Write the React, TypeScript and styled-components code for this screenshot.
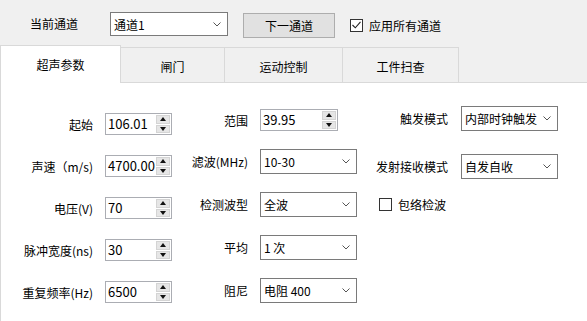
import React, { FC } from 'react';
import styled, { createGlobalStyle } from 'styled-components';

const GlobalStyle = createGlobalStyle`
  html, body {
    margin: 0;
    padding: 0;
    background: #f0f0f0;
  }

  body {
    font-family: "Noto Sans CJK SC", "Noto Sans", sans-serif;
    font-size: 12px;
    color: #000;
  }
`;

const Window = styled.div`
  width: 587px;
  height: 321px;
  background: #f0f0f0;
  display: flex;
  flex-direction: column;
  overflow: hidden;
`;

const TopBar = styled.div`
  height: 45px;
  padding: 12px 0 0 30px;
  box-sizing: border-box;
  display: flex;
  align-items: flex-start;
`;

const TopLabel = styled.span`
  width: 80px;
  height: 24px;
  line-height: 24px;
`;

const Button = styled.button`
  margin: 1px 0 0 15px;
  width: 92px;
  height: 25px;
  padding: 0;

  font: inherit;
  color: #000;
  background: #e1e1e1;
  border: 1px solid #adadad;
`;

const CheckRow = styled.label<{ $ml?: number; $h: number }>`
  margin-left: ${ p => p.$ml ?? 0 }px;
  height: ${ p => p.$h }px;

  display: flex;
  align-items: center;
  gap: 6px;
`;

const CheckBox = styled.span`
  width: 13px;
  height: 13px;
  box-sizing: border-box;

  display: flex;
  align-items: center;
  justify-content: center;

  background: #fff;
  border: 1px solid #333;
`;

const TabBar = styled.div`
  height: 37px;
  display: flex;
  align-items: flex-end;
  position: relative;
  z-index: 1;
`;

const Tab = styled.div<{ $w: number; $active?: boolean }>`
  width: ${ p => p.$w }px;
  height: ${ p => p.$active ? 38 : 35 }px;
  margin-bottom: ${ p => p.$active ? -1 : 0 }px;
  box-sizing: border-box;

  display: flex;
  align-items: center;
  justify-content: center;
  padding-top: ${ p => p.$active ? 0 : 2 }px;

  background: ${ p => p.$active ? '#fff' : '#f0f0f0' };
  border: 1px solid #d9d9d9;
  border-bottom: none;

  & + & {
    border-left: none;
  }
`;

const Panel = styled.div`
  flex: 1;
  background: #fff;
  border-top: 1px solid #d9d9d9;
  border-left: 1px solid #d9d9d9;

  display: flex;
  align-items: flex-start;
`;

const Column = styled.div<{ $top: number; $gap: number; $labelW: number; $boxGap?: number }>`
  --label-w: ${ p => p.$labelW }px;
  --box-gap: ${ p => p.$boxGap ?? 12 }px;

  padding-top: ${ p => p.$top }px;
  display: flex;
  flex-direction: column;
  gap: ${ p => p.$gap }px;
`;

const Field = styled.div`
  display: flex;
  align-items: center;
  gap: var(--box-gap);
`;

const Label = styled.span`
  width: var(--label-w);
  text-align: right;
  white-space: nowrap;
`;

const SpinFrame = styled.div<{ $w: number }>`
  width: ${ p => p.$w }px;
  height: 22px;
  box-sizing: border-box;

  display: flex;
  align-items: stretch;

  background: #fff;
  border: 1px solid #abadb3;
`;

const SpinValue = styled.span`
  flex: 1;
  padding-left: 2px;
  line-height: 20px;
  font-size: 13px;
`;

const SpinButtons = styled.div`
  width: 14px;
  margin: 1px 1px 1px 0;
  display: flex;
  flex-direction: column;
  gap: 1px;
`;

const SpinButton = styled.div`
  flex: 1;
  display: flex;
  align-items: center;
  justify-content: center;
  background: #e6e6e6;
  border: 1px solid #d4d4d4;
`;

const ComboFrame = styled.div<{ $w: number; $h?: number }>`
  width: ${ p => p.$w }px;
  height: ${ p => p.$h ?? 25 }px;
  box-sizing: border-box;
  padding: 0 6px 0 3px;

  display: flex;
  align-items: center;
  justify-content: space-between;

  background: #fff;
  border: 1px solid #7a7a7a;
  font-size: 12px;
  white-space: nowrap;
`;

const Wide = styled.div<{ $pl: number; $mt: number }>`
  padding-left: ${ p => p.$pl }px;
  margin-top: ${ p => p.$mt }px;
`;

const Chevron: FC = () => (
	<svg width="8" height="5" viewBox="0 0 8 5">
		<polyline points="0.5,0.5 4,4 7.5,0.5" fill="none" stroke="#555" strokeWidth="1" />
	</svg>
);

const Arrow: FC<{ up?: boolean }> = ({ up }) => (
	<svg width="6" height="4" viewBox="0 0 6 4">
		<polygon points={ up ? '3,0 6,4 0,4' : '0,0 6,0 3,4' } fill="#111" />
	</svg>
);

const Tick: FC = () => (
	<svg width="9" height="8" viewBox="0 0 9 8">
		<polyline points="0.5,4 3.3,6.8 8.5,0.8" fill="none" stroke="#222" strokeWidth="1.1" />
	</svg>
);

const Spin: FC<{ value: string; w: number }> = ({ value, w }) => (
	<SpinFrame $w={ w }>
		<SpinValue>{ value }</SpinValue>
		<SpinButtons>
			<SpinButton><Arrow up /></SpinButton>
			<SpinButton><Arrow /></SpinButton>
		</SpinButtons>
	</SpinFrame>
);

const Combo: FC<{ value: string; w: number; h?: number }> = ({ value, w, h }) => (
	<ComboFrame $w={ w } $h={ h }>
		<span>{ value }</span>
		<Chevron />
	</ComboFrame>
);

const tabs = [
	{ title: '超声参数', w: 121, active: true },
	{ title: '闸门', w: 104 },
	{ title: '运动控制', w: 118 },
	{ title: '工件扫查', w: 116 },
];

export default function App() {
	return (
		<>
			<GlobalStyle />
			<Window>
				<TopBar>
					<TopLabel>当前通道</TopLabel>
					<Combo value="通道1" w={ 118 } h={ 24 } />
					<Button>下一通道</Button>
					<CheckRow $ml={ 15 } $h={ 26 }>
						<CheckBox><Tick /></CheckBox>
						<span>应用所有通道</span>
					</CheckRow>
				</TopBar>

				<TabBar>
					{ tabs.map(t => (
						<Tab key={ t.title } $w={ t.w } $active={ t.active }>{ t.title }</Tab>
					)) }
				</TabBar>

				<Panel>
					<Column $top={ 30 } $gap={ 20 } $labelW={ 92 }>
						<Field><Label>起始</Label><Spin value="106.01" w={ 67 } /></Field>
						<Field><Label>声速（m/s)</Label><Spin value="4700.00" w={ 67 } /></Field>
						<Field><Label>电压(V)</Label><Spin value="70" w={ 67 } /></Field>
						<Field><Label>脉冲宽度(ns)</Label><Spin value="30" w={ 67 } /></Field>
						<Field><Label>重复频率(Hz)</Label><Spin value="6500" w={ 67 } /></Field>
					</Column>

					<Column $top={ 26 } $gap={ 18 } $labelW={ 76 }>
						<Field><Label>范围</Label><Spin value="39.95" w={ 78 } /></Field>
						<Field><Label>滤波(MHz)</Label><Combo value="10-30" w={ 97 } /></Field>
						<Field><Label>检测波型</Label><Combo value="全波" w={ 97 } /></Field>
						<Field><Label>平均</Label><Combo value="1 次" w={ 97 } /></Field>
						<Field><Label>阻尼</Label><Combo value="电阻 400" w={ 97 } /></Field>
					</Column>

					<Column $top={ 23 } $gap={ 23 } $labelW={ 91 } $boxGap={ 13 }>
						<Field><Label>触发模式</Label><Combo value="内部时钟触发" w={ 97 } /></Field>
						<Field><Label>发射接收模式</Label><Combo value="自发自收" w={ 97 } /></Field>
						<Wide $pl={ 22 } $mt={ -5 }>
							<CheckRow $h={ 14 }>
								<CheckBox />
								<span>包络检波</span>
							</CheckRow>
						</Wide>
					</Column>
				</Panel>
			</Window>
		</>
	);
}
